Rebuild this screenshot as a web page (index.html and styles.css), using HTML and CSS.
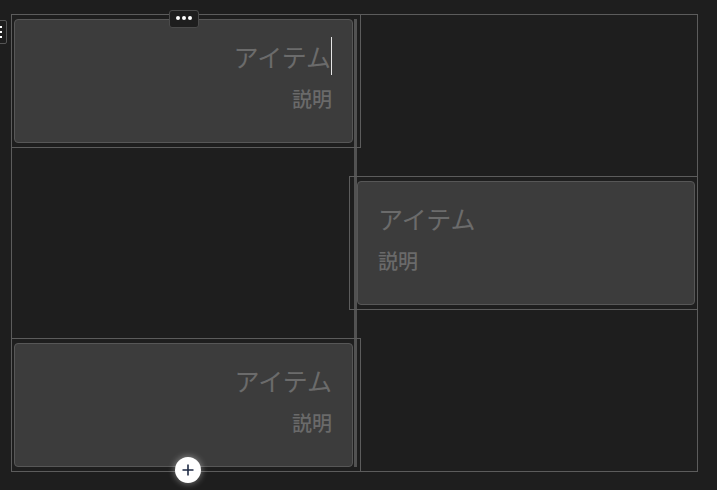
FILE: index.html
```html
<!DOCTYPE html>
<html lang="ja">
<head>
<meta charset="utf-8">
<title>Grid</title>
<link rel="stylesheet" href="styles.css">
</head>
<body>
<div class="handle"><i></i><i></i><i></i><i></i><i></i><i></i></div>
<div class="board">
  <div class="col col-left">
    <div class="item item-left">
      <div class="toolbar-btn"><i></i><i></i><i></i></div>
      <div class="card align-right">
        <div class="title">アイテム<span class="caret"></span></div>
        <div class="desc">説明</div>
      </div>
    </div>
    <div class="item item-left">
      <div class="card align-right">
        <div class="title">アイテム</div>
        <div class="desc">説明</div>
      </div>
      <button class="add-btn" aria-label="追加"><svg width="12" height="12" viewBox="0 0 12 12"><path d="M6 0.5V11.5M0.5 6H11.5" stroke="#1f2a44" stroke-width="1.6" fill="none"/></svg></button>
    </div>
  </div>
  <div class="divider"></div>
  <div class="col col-right">
    <div class="item item-right">
      <div class="card">
        <div class="title">アイテム</div>
        <div class="desc">説明</div>
      </div>
    </div>
  </div>
</div>
</body>
</html>
```
FILE: styles.css
```css
html, body {
  margin: 0;
  padding: 0;
}
body {
  background: #1e1e1e;
  font-family: "Noto Sans CJK JP", "Noto Sans", sans-serif;
  height: 490px;
  overflow: hidden;
  position: relative;
}
.board {
  margin: 14px 0 0 11px;
  width: 685px;
  height: 456px;
  border: 1px solid #5c5c5c;
  display: grid;
  grid-template-columns: 342px 3px 340px;
}
.col {
  display: flex;
  flex-direction: column;
  min-width: 0;
}
.col-left {
  justify-content: space-between;
}
.col-right {
  justify-content: center;
}
.divider {
  margin: 4px 0;
  background: #525252;
}
.item {
  position: relative;
  box-sizing: border-box;
  height: 132px;
  flex-shrink: 0;
  outline: 1px solid #5c5c5c;
  display: flex;
}
.item-left {
  width: 348px;
  padding: 4px 7px 4px 2px;
}
.item-right {
  width: 347px;
  margin-left: -7px;
  padding: 4px 2px 4px 7px;
}
.card {
  flex: 1;
  box-sizing: border-box;
  background: #3c3c3c;
  border: 1px solid #575757;
  border-radius: 4px;
  padding: 17px 20px 0;
}
.align-right {
  text-align: right;
}
.title {
  font-size: 25px;
  line-height: 38px;
  color: #6b6b6b;
}
.caret {
  display: inline-block;
  width: 1px;
  height: 38px;
  background: #e6e6e6;
  vertical-align: top;
}
.desc {
  margin-top: 10px;
  font-size: 20px;
  line-height: 28px;
  font-weight: 500;
  color: #6a6a6a;
}
.toolbar-btn {
  position: absolute;
  left: 157px;
  top: -5px;
  box-sizing: border-box;
  width: 30px;
  height: 18px;
  background: #1e1e1e;
  border: 1px solid #4a4a4a;
  border-radius: 3px;
  display: flex;
  align-items: center;
  justify-content: center;
  gap: 2px;
  padding-bottom: 3px;
}
.toolbar-btn i {
  width: 4px;
  height: 4px;
  border-radius: 50%;
  background: #ffffff;
}
.add-btn {
  position: absolute;
  left: 163px;
  top: 118px;
  width: 26px;
  height: 26px;
  padding: 0;
  border: none;
  border-radius: 50%;
  background: #ffffff;
  box-shadow: 0 0 6px 1px rgba(255, 255, 255, 0.35);
  display: flex;
  align-items: center;
  justify-content: center;
}
.handle {
  position: absolute;
  left: -10px;
  top: 20px;
  box-sizing: border-box;
  width: 17px;
  height: 24px;
  background: #1e1e1e;
  border: 1px solid #555555;
  border-radius: 2px;
  display: grid;
  grid-template-columns: 2px 2px;
  grid-auto-rows: 2px;
  column-gap: 4px;
  row-gap: 3px;
  padding: 5px 0 0 3px;
}
.handle i {
  background: #ffffff;
}
```
